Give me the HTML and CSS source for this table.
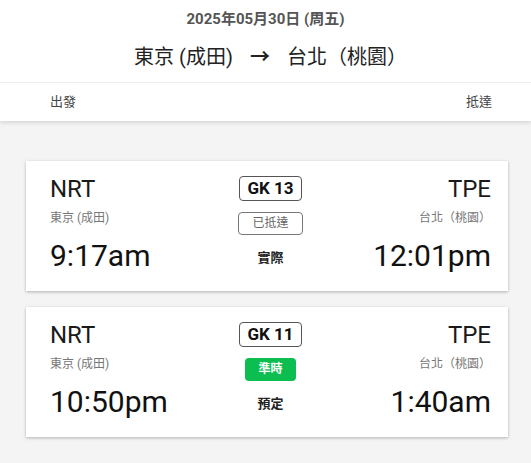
FILE: index.html
```html
<!DOCTYPE html>
<html lang="zh-Hant">
<head>
<meta charset="utf-8">
<link rel="stylesheet" href="styles.css">
</head>
<body>
<header class="top">
  <div class="date">2025年05月30日 (周五)</div>
  <div class="route"><span>東京 (成田)</span><span class="arrow">→</span><span>台北（桃園）</span></div>
  <div class="labels"><span>出發</span><span>抵達</span></div>
</header>
<main class="list">
  <section class="card">
    <div class="side">
      <div class="code">NRT</div>
      <div class="city">東京 (成田)</div>
      <div class="time">9:17am</div>
    </div>
    <div class="mid">
      <div class="flight">GK 13</div>
      <div class="status arrived">已抵達</div>
      <div class="kind">實際</div>
    </div>
    <div class="side right">
      <div class="code">TPE</div>
      <div class="city">台北（桃園）</div>
      <div class="time">12:01pm</div>
    </div>
  </section>
  <section class="card">
    <div class="side">
      <div class="code">NRT</div>
      <div class="city">東京 (成田)</div>
      <div class="time">10:50pm</div>
    </div>
    <div class="mid">
      <div class="flight">GK 11</div>
      <div class="status ontime">準時</div>
      <div class="kind">預定</div>
    </div>
    <div class="side right">
      <div class="code">TPE</div>
      <div class="city">台北（桃園）</div>
      <div class="time">1:40am</div>
    </div>
  </section>
</main>
</body>
</html>
```
FILE: styles.css
```css
html, body {
  margin: 0;
  padding: 0;
}
body {
  background: #f4f4f4;
  font-family: Roboto, "Noto Sans CJK TC", sans-serif;
  color: #1a1a1a;
  width: 531px;
  height: 463px;
  overflow: hidden;
}
.top {
  background: #fff;
  box-shadow: 0 2px 4px rgba(0,0,0,0.12);
  position: relative;
}
.date {
  text-align: center;
  font-size: 15px;
  font-weight: 700;
  color: #555;
  padding-top: 8px;
  height: 22px;
  line-height: 22px;
}
.route {
  display: flex;
  justify-content: center;
  gap: 17px;
  font-size: 20px;
  color: #222;
  height: 30px;
  line-height: 30px;
  margin-top: 12px;
  padding: 0 0 10px 10px;
  border-bottom: 1px solid #eeeeee;
}
.arrow {
  font-weight: 700;
}
.labels {
  display: flex;
  justify-content: space-between;
  padding: 0 39px 0 50px;
  height: 38px;
  line-height: 38px;
  font-size: 13px;
  color: #444;
}
.list {
  padding: 40px 23px 20px 26px;
  display: flex;
  flex-direction: column;
  gap: 16px;
}
.card {
  background: #fff;
  box-shadow: 0 1px 3px rgba(0,0,0,0.28);
  height: 130px;
  box-sizing: border-box;
  padding: 14px 17px 0 24px;
  display: grid;
  grid-template-columns: 1fr auto 1fr;
}
.side {
  display: flex;
  flex-direction: column;
}
.side.right {
  align-items: flex-end;
}
.code {
  font-size: 24px;
  line-height: 28px;
  color: #1a1a1a;
}
.city {
  font-size: 12px;
  color: #777;
  line-height: 16px;
  margin-top: 7px;
}
.time {
  font-size: 30px;
  line-height: 36px;
  margin-top: 12px;
  color: #111;
}
.mid {
  display: flex;
  flex-direction: column;
  align-items: center;
  padding-top: 1px;
}
.flight {
  border: 1px solid #555;
  border-radius: 4px;
  font-weight: 700;
  font-size: 17px;
  line-height: 23px;
  padding: 0 7px;
  color: #111;
}
.status {
  margin-top: 11px;
  border-radius: 4px;
  font-size: 12px;
  line-height: 21px;
  height: 23px;
  box-sizing: border-box;
}
.status.arrived {
  border: 1px solid #777;
  color: #666;
  padding: 0 13px;
}
.status.ontime {
  background: #0cbd4f;
  color: #fff;
  font-weight: 700;
  line-height: 23px;
  padding: 0 13px;
}
.kind {
  margin-top: 13px;
  font-size: 13px;
  font-weight: 700;
  color: #222;
  line-height: 20px;
}
```
